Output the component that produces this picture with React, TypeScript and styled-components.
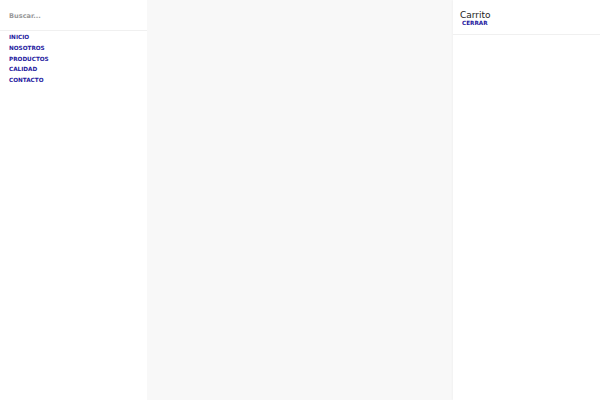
import React from 'react'
import styled, { createGlobalStyle } from 'styled-components'

const GlobalStyle = createGlobalStyle`
  html, body, #root {
    margin: 0;
    height: 100%;
  }
  body {
    font-family: "DejaVu Sans", Verdana, sans-serif;
    background: #f8f8f8;
  }
`

const Layout = styled.div`
  display: grid;
  grid-template-columns: 147px 1fr 147px;
  height: 100vh;
`

const Sidebar = styled.aside`
  background: #fff;
  display: flex;
  flex-direction: column;
  box-shadow: 1px 0 2px rgba(0, 0, 0, 0.03);
`

const SearchInput = styled.input`
  border: none;
  border-bottom: 1px solid #f0f0f0;
  height: 31px;
  padding: 1px 9px 0;
  font-family: inherit;
  font-size: 6.6px;
  font-weight: bold;
  outline: none;
  box-sizing: border-box;

  &::placeholder {
    color: #999;
  }
`

const Nav = styled.nav`
  display: flex;
  flex-direction: column;
  padding: 1px 9px;
`

const NavLink = styled.a`
  font-size: 5.7px;
  font-weight: bold;
  color: #1f1aa0;
  text-decoration: none;
  line-height: 10.8px;
  text-transform: uppercase;
`

const Main = styled.main`
  background: #f8f8f8;
`

const Cart = styled.aside`
  background: #fff;
  box-shadow: -1px 0 2px rgba(0, 0, 0, 0.03);
`

const CartHeader = styled.header`
  height: 35px;
  box-sizing: border-box;
  border-bottom: 1px solid #f0f0f0;
  padding: 10px 7px 0;
`

const CartTitle = styled.div`
  font-size: 9px;
  color: #222;
  line-height: 10px;
`

const CloseButton = styled.button`
  display: block;
  border: none;
  background: none;
  padding: 0 2px;
  font-family: inherit;
  font-size: 5.7px;
  font-weight: bold;
  color: #1f1aa0;
  line-height: 6px;
  text-transform: uppercase;
  cursor: pointer;
`

const links = ['Inicio', 'Nosotros', 'Productos', 'Calidad', 'Contacto']

export default function App() {
  return (
    <>
      <GlobalStyle />
      <Layout>
        <Sidebar>
          <SearchInput placeholder="Buscar..." />
          <Nav>
            {links.map((l) => (
              <NavLink key={l} href="#">
                {l}
              </NavLink>
            ))}
          </Nav>
        </Sidebar>
        <Main />
        <Cart>
          <CartHeader>
            <CartTitle>Carrito</CartTitle>
            <CloseButton>Cerrar</CloseButton>
          </CartHeader>
        </Cart>
      </Layout>
    </>
  )
}
